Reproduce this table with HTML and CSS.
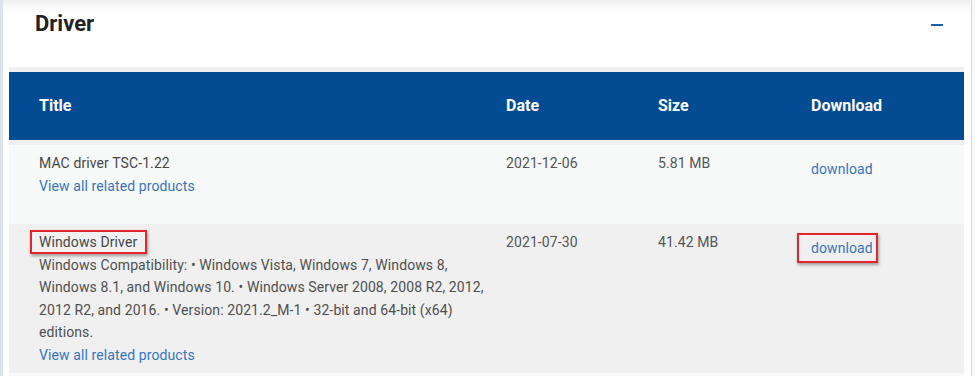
FILE: index.html
```html
<!DOCTYPE html>
<html lang="en">
<head>
  <meta charset="UTF-8">
  <title>Driver downloads</title>
  <link rel="stylesheet" href="styles.css">
</head>
<body>
  <section class="card">
    <div class="card-head">
      <h2>Driver</h2>
      <button class="collapse" title="Collapse"></button>
    </div>
    <div class="files">
      <div class="row head">
        <div>Title</div>
        <div>Date</div>
        <div>Size</div>
        <div>Download</div>
      </div>
      <div class="row odd">
        <div class="title-cell">
          <div class="name">MAC driver TSC-1.22</div>
          <a href="#" class="related">View all related products</a>
        </div>
        <div class="meta">2021-12-06</div>
        <div class="meta">5.81 MB</div>
        <div class="dl"><a href="#">download</a></div>
      </div>
      <div class="row">
        <div class="title-cell">
          <div class="name"><span class="mark">Windows Driver</span></div>
          <div class="desc">Windows Compatibility: • Windows Vista, Windows 7, Windows 8, Windows 8.1, and Windows 10. • Windows Server 2008, 2008 R2, 2012, 2012 R2, and 2016. • Version: 2021.2_M-1 • 32-bit and 64-bit (x64) editions.</div>
          <a href="#" class="related">View all related products</a>
        </div>
        <div class="meta">2021-07-30</div>
        <div class="meta">41.42 MB</div>
        <div class="dl"><a href="#" class="mark mark-dl">download</a></div>
      </div>
      <div class="row odd"></div>
    </div>
  </section>
</body>
</html>
```

FILE: styles.css
```css
:root { --blue: #034c94; --link: #3676c0; --text: #4f4f4f; --row: #f8f9f9; --alt: #f0f0f0; }
* { box-sizing: border-box; }
body { margin:0; height:100vh; overflow:hidden; background:#f7f8fa; font-family:Roboto, 'Liberation Sans', sans-serif; color:var(--text); }
.card { width:972px; height:100%; overflow:hidden; border-left:3px solid #dde3e9; border-right:1px solid #d9dcdf; background:linear-gradient(180deg,#efefef 0,#fbfbfb 8px,#fff 14px); padding:0 7px 0 6px; }
.card-head { height:67px; display:flex; justify-content:space-between; align-items:flex-start; padding:9px 21px 0 26px; }
h2 { margin:0; font-size:22px; line-height:30px; font-weight:700; color:#222; }
.collapse { display:block; border:none; background:#1d5ea8; padding:0; margin-top:15px; width:12px; height:2px; cursor:pointer; }
.files { background:var(--alt); padding-top:5px; }
.row { display:grid; grid-template-columns:467px 152px 153px 1fr; padding:7px 0 6px 30px; font-size:14px; line-height:22.6px; letter-spacing:0.1px; }
.row.head { background:var(--blue); color:#fff; font-weight:700; font-size:16px; letter-spacing:0; height:68px; align-items:center; padding:0 0 0 30px; margin-bottom:5px; }
.title-cell { padding-right:8px; }
.row.odd { background:var(--row); min-height:79px; }
.name { color:#474747; }
a { color:var(--link); text-decoration:none; }
.related { display:block; }
.meta { color:#555; }
.dl { padding-top:6px; }
.mark { border:2px solid #e3262b; padding:2px 8px 2px 7px; margin:0 -10px 0 -9px; box-shadow:1px 2px 3px rgba(0,0,0,0.35); }
.mark-dl { padding:5px 3px 5px 12px; margin:0 -5px 0 -14px; }
```
